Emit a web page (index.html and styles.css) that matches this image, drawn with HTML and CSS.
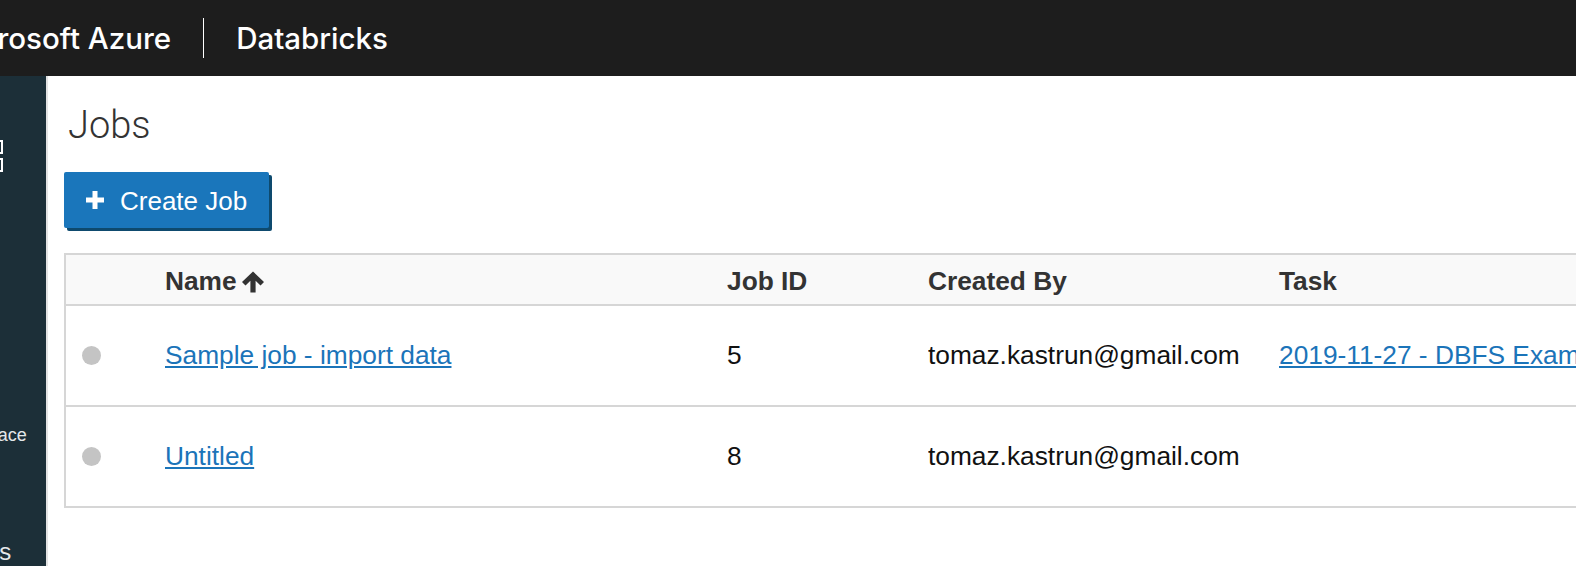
FILE: index.html
```html
<!DOCTYPE html>
<html lang="en">
<head>
<meta charset="utf-8">
<title>Jobs - Databricks</title>
<link rel="stylesheet" href="styles.css">
</head>
<body>
<header class="topbar">
  <span class="brand">Microsoft Azure</span>
  <span class="divider"></span>
  <span class="product">Databricks</span>
</header>
<div class="layout">
  <nav class="sidebar">
    <div class="sidebar-inner">
      <svg class="nav-logo" width="40" height="32" viewBox="0 0 40 32">
        <rect x="1" y="1" width="38" height="12" fill="none" stroke="#ffffff" stroke-width="2"/>
        <rect x="1" y="19" width="38" height="12" fill="none" stroke="#ffffff" stroke-width="2"/>
      </svg>
      <span class="nav-label">Workspace</span>
      <span class="nav-label big">Jobs</span>
    </div>
  </nav>
  <main class="content">
    <h1 class="title">Jobs</h1>
    <button class="btn-primary" type="button">
      <svg class="plus" width="18" height="18" viewBox="0 0 18 18"><rect x="6.5" y="0" width="5" height="18" fill="#fff"/><rect x="0" y="6.5" width="18" height="5" fill="#fff"/></svg>
      <span>Create Job</span>
    </button>
    <div class="table-wrap">
      <table class="jobs">
        <colgroup>
          <col class="c-status"><col class="c-name"><col class="c-id"><col class="c-by"><col class="c-task">
        </colgroup>
        <thead>
          <tr>
            <th></th>
            <th>Name<svg class="sort" width="24" height="22" viewBox="0 0 24 22"><path d="M12 0.5 L23 11 L19.5 14.5 L14.6 9.8 V21.5 H9.4 V9.8 L4.5 14.5 L1 11 Z" fill="#333"/></svg></th>
            <th>Job ID</th>
            <th>Created By</th>
            <th>Task</th>
          </tr>
        </thead>
        <tbody>
          <tr>
            <td><span class="dot"></span></td>
            <td><a href="#">Sample job - import data</a></td>
            <td>5</td>
            <td>tomaz.kastrun@gmail.com</td>
            <td class="task"><a href="#">2019-11-27 - DBFS Examples</a></td>
          </tr>
          <tr>
            <td><span class="dot"></span></td>
            <td><a href="#">Untitled</a></td>
            <td>8</td>
            <td>tomaz.kastrun@gmail.com</td>
            <td></td>
          </tr>
        </tbody>
      </table>
    </div>
  </main>
</div>
</body>
</html>
```

FILE: styles.css
```css
html, body {
  margin: 0;
  padding: 0;
}
body {
  width: 1576px;
  height: 566px;
  overflow: hidden;
  background: #ffffff;
  font-family: "Liberation Sans", Arial, sans-serif;
}
.topbar {
  height: 76px;
  background: #1d1d1d;
  display: flex;
  align-items: center;
  color: #ffffff;
  font-family: Inter, "Liberation Sans", sans-serif;
  font-weight: 500;
  font-size: 29.5px;
  white-space: nowrap;
}
.brand {
  margin-left: -54px;
}
.divider {
  width: 1px;
  height: 40px;
  background: #ffffff;
  margin: 0 32px 0 32px;
}
.layout {
  display: flex;
  height: 490px;
}
.sidebar {
  width: 46px;
  flex: none;
  background: #1c2f38;
  border-right: 2px solid #e3e3e3;
  overflow: hidden;
}
.sidebar-inner {
  width: 100px;
  margin-left: -69px;
  display: flex;
  flex-direction: column;
  align-items: center;
  padding-top: 64px;
  color: #e4e8ea;
}
.nav-logo {
  display: block;
  margin-left: 4px;
}
.nav-label {
  font-size: 18px;
  line-height: 22px;
  margin-top: 252px;
  margin-left: 2px;
  white-space: nowrap;
}
.nav-label.big {
  font-size: 24px;
  line-height: 28px;
  margin-top: 92px;
  margin-left: 10px;
}
.content {
  flex: 1;
  padding-left: 16px;
  overflow: hidden;
}
.title {
  margin: 27px 0 0 4px;
  font-family: Roboto, "Liberation Sans", sans-serif;
  font-weight: 300;
  font-size: 38px;
  line-height: 44px;
  color: #333333;
}
.btn-primary {
  margin-top: 25px;
  width: 205px;
  height: 56px;
  display: flex;
  align-items: center;
  gap: 16px;
  padding: 3px 0 0 22px;
  border: none;
  border-radius: 2px;
  background: #1a76bb;
  box-shadow: 3px 3px 0 #0e4a6e;
  color: #ffffff;
  font-family: "Liberation Sans", Arial, sans-serif;
  font-size: 26px;
}
.plus {
  flex: none;
  margin-top: -3px;
}
.table-wrap {
  margin-top: 25px;
  width: 1700px;
}
.jobs {
  width: 100%;
  table-layout: fixed;
  border-collapse: collapse;
  border: 2px solid #d6d6d6;
  font-size: 26.3px;
  color: #111111;
}
.c-status { width: 100px; }
.c-name { width: 562px; }
.c-id { width: 201px; }
.c-by { width: 351px; }
.jobs thead tr {
  background: #f9f9f9;
  height: 51px;
}
.jobs th {
  text-align: left;
  font-weight: bold;
  color: #333333;
  padding: 3px 0 0 0;
  white-space: nowrap;
}
.sort {
  vertical-align: -3px;
  margin-left: 4px;
}
.jobs tbody tr {
  height: 101px;
  border-top: 2px solid #d6d6d6;
}
.jobs td {
  padding: 0;
  white-space: nowrap;
  overflow: hidden;
}
.jobs a {
  color: #1b74b9;
  text-decoration: underline;
}
.dot {
  display: block;
  width: 19px;
  height: 19px;
  border-radius: 50%;
  background: #c4c4c4;
  margin-left: 16px;
}
```
